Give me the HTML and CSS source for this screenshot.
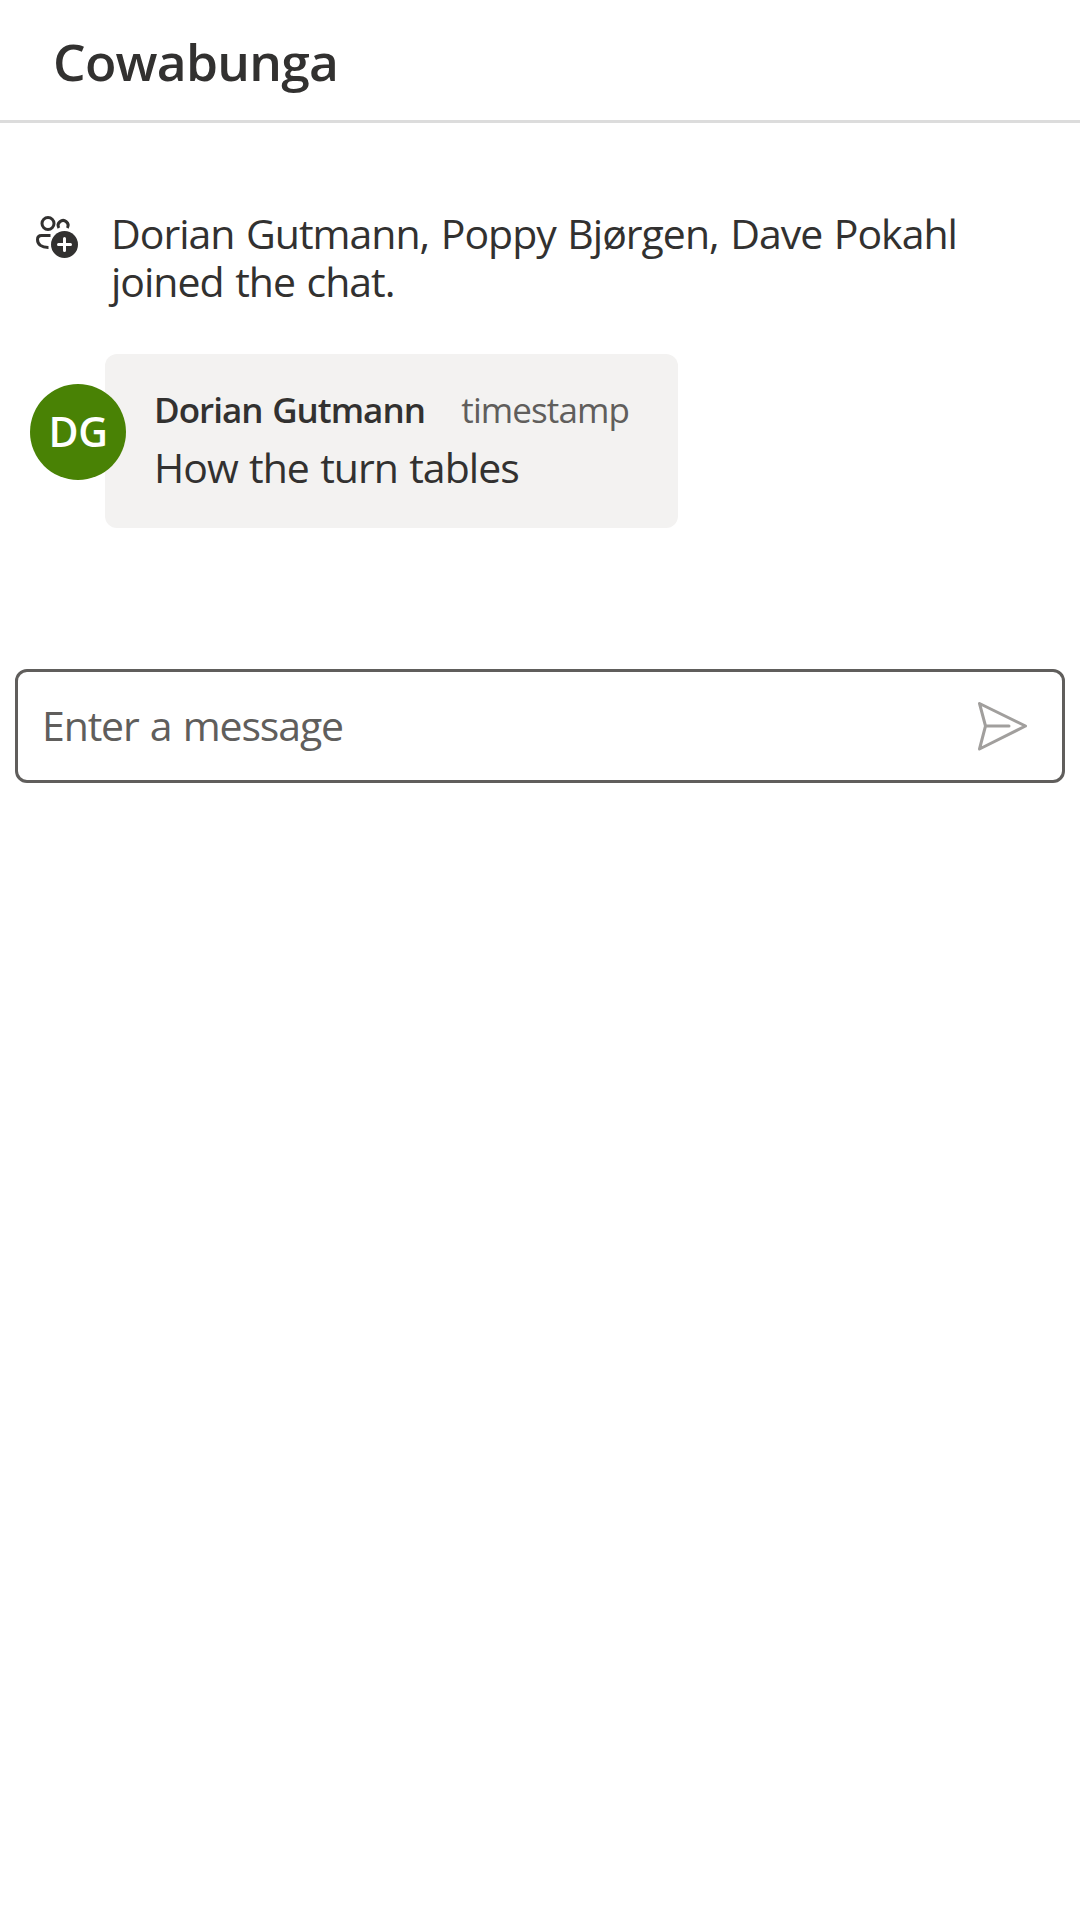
FILE: index.html
```html
<!DOCTYPE html>
<html lang="en">
<head>
<meta charset="utf-8">
<title>Cowabunga</title>
<link rel="stylesheet" href="styles.css">
</head>
<body>
<header class="header"><h1 class="title">Cowabunga</h1></header>
<main class="thread">
  <div class="system">
    <svg class="people" viewBox="0 0 48 48" width="48" height="48" fill="none" stroke="#323130" stroke-width="3">
      <circle cx="18" cy="13.5" r="6"/>
      <path d="M28.9 18A4.9 4.9 0 1 1 37.3 18"/>
      <path d="M20.5 25.5H11.5C9 25.5 7.5 27 7.5 29.5C7.5 34.5 11.5 37.5 18.5 37.4"/>
      <circle cx="34.5" cy="34.5" r="13.5" fill="#323130" stroke="none"/>
      <path d="M34.5 28.5V40.5M28.5 34.5H40.5" stroke="#fff" stroke-linecap="round"/>
    </svg>
    <p class="system-text">Dorian Gutmann, Poppy Bjørgen, Dave Pokahl<br>joined the chat.</p>
  </div>
  <article class="message">
    <div class="avatar">DG</div>
    <div class="bubble">
      <div class="meta"><span class="author">Dorian Gutmann</span><span class="time">timestamp</span></div>
      <p class="text">How the turn tables</p>
    </div>
  </article>
</main>
<div class="composer">
  <span class="placeholder">Enter a message</span>
  <svg class="send" viewBox="0 0 60 60" width="60" height="60" fill="none" stroke="#a19f9d" stroke-width="3" stroke-linejoin="round" stroke-linecap="round">
    <path d="M7.5 7.5L53.5 30L7.5 53L13.5 30ZM13.5 30H37"/>
  </svg>
</div>
</body>
</html>
```
FILE: styles.css
```css
* { box-sizing: border-box; }
body {
  margin: 0;
  background: #fff;
  color: #323130;
  font-family: "Open Sans", "Noto Sans", sans-serif;
  font-size: 41px;
}
h1, p { margin: 0; font-weight: 400; }
.header {
  height: 123px;
  padding: 21px 53px 0;
  border-bottom: 3px solid #dcdcdc;
}
.title {
  font-size: 51.5px;
  line-height: 80px;
  font-weight: 600;
  letter-spacing: -0.75px;
}
.thread { padding: 86px 30px 0; }
.system { display: flex; }
.people { margin: 1px 33px 0 0; }
.system-text {
  line-height: 48px;
  letter-spacing: -1px;
  word-spacing: 1.9px;
  white-space: nowrap;
}
.message {
  display: flex;
  align-items: flex-start;
  margin-top: 49px;
}
.avatar {
  width: 96px;
  height: 96px;
  margin: 30px -21px 0 0;
  border-radius: 50%;
  background: #498205;
  color: #fff;
  font-weight: 600;
  line-height: 94px;
  letter-spacing: -0.5px;
  text-align: center;
  z-index: 1;
}
.bubble {
  width: 573px;
  height: 174px;
  padding: 32px 49px 0;
  border-radius: 12px;
  background: #f3f2f1;
}
.meta {
  display: flex;
  justify-content: space-between;
  font-size: 35px;
  line-height: 48px;
  white-space: nowrap;
}
.author { font-weight: 600; letter-spacing: -0.98px; word-spacing: 1.5px; }
.time { color: #605e5c; letter-spacing: -0.9px; }
.text {
  margin-top: 3px;
  line-height: 60px;
  letter-spacing: -0.95px;
  word-spacing: 1.5px;
}
.composer {
  display: flex;
  align-items: center;
  justify-content: space-between;
  height: 114px;
  margin: 141px 15px 0;
  padding: 0 30px 0 24px;
  border: 3px solid #605e5c;
  border-radius: 12px;
}
.placeholder {
  padding-bottom: 2px;
  color: #605e5c;
  letter-spacing: -1.15px;
  word-spacing: 1.8px;
}
```
